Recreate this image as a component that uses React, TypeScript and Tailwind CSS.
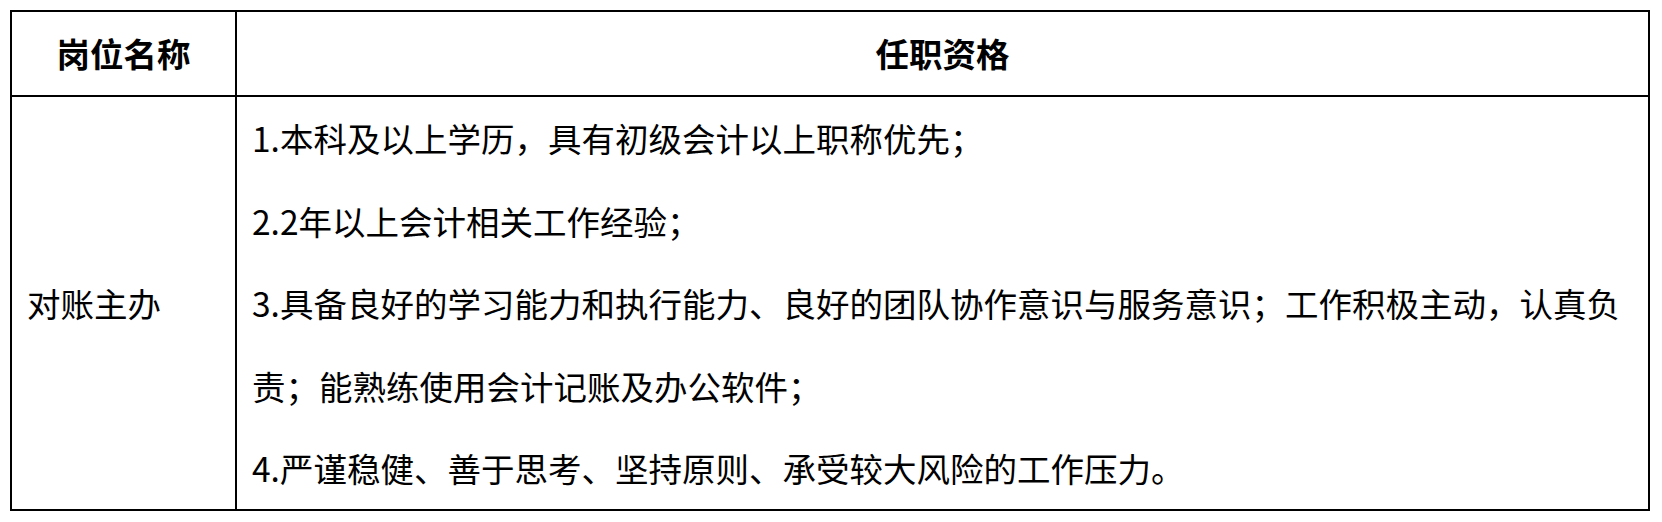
import React from "react";

const font = { fontFamily: '"Noto Sans CJK SC", "Noto Sans", sans-serif' };

const requirements = [
  "1.本科及以上学历，具有初级会计以上职称优先；",
  "2.2年以上会计相关工作经验；",
  "3.具备良好的学习能力和执行能力、良好的团队协作意识与服务意识；工作积极主动，认真负责；能熟练使用会计记账及办公软件；",
  "4.严谨稳健、善于思考、坚持原则、承受较大风险的工作压力。",
];

export default function App() {
  return (
    <div className="w-[1662px] h-[522px] bg-white pt-[10px] pl-[10px]" style={font}>
      <div className="w-[1640px] border-2 border-black grid grid-cols-[225px_1fr] text-black text-[33.5px]">
        {/* header */}
        <div className="h-[85px] border-r-2 border-b-2 border-black flex items-center justify-center font-bold">
          岗位名称
        </div>
        <div className="h-[85px] border-b-2 border-black flex items-center justify-center font-bold">
          任职资格
        </div>

        {/* body */}
        <div className="h-[412px] border-r-2 border-black flex items-center pl-[15px]">
          对账主办
        </div>
        <div className="h-[412px] px-[15px] leading-[82.5px]">
          {requirements.map((r) => (
            <p key={r}>{r}</p>
          ))}
        </div>
      </div>
    </div>
  );
}
